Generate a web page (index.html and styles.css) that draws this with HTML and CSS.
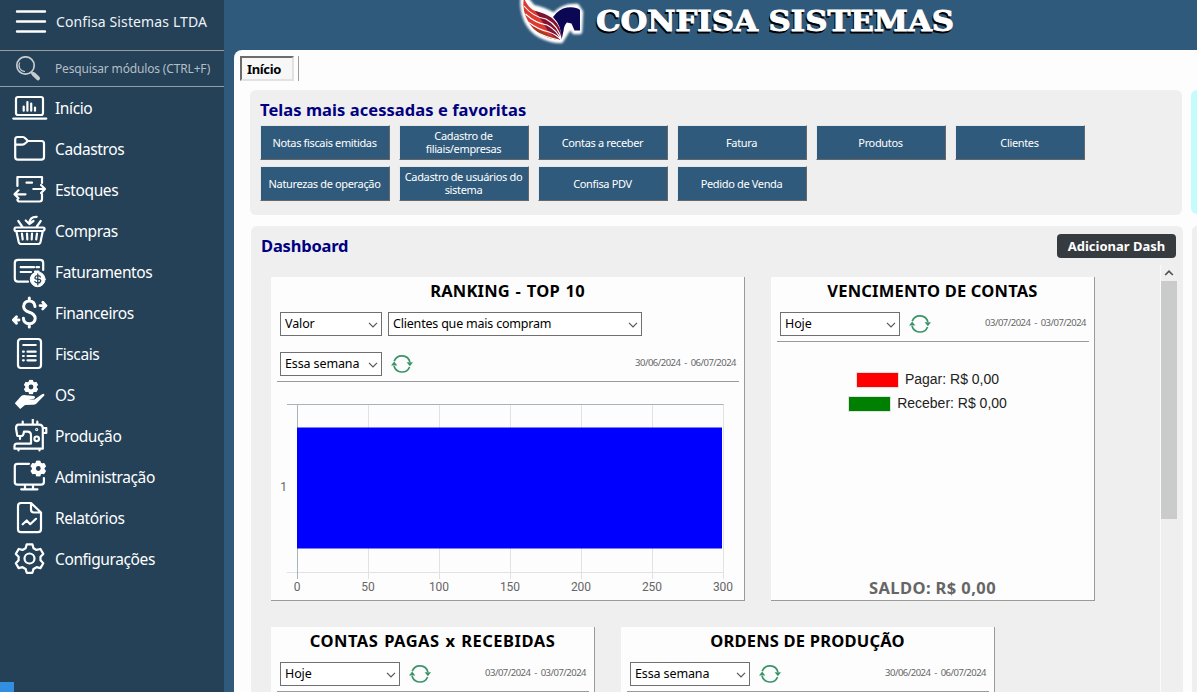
FILE: index.html
```html
<!DOCTYPE html>
<html lang="pt-BR">
<head>
<meta charset="utf-8">
<title>Confisa Sistemas</title>
<link rel="stylesheet" href="styles.css">
</head>
<body>
<svg class="defs" width="0" height="0">
  <symbol id="gear" viewBox="-16 -16 32 32"><path stroke-linejoin="round" d="M-3.9-10.2-2.8-14H2.8L3.9-10.2 6.88-8.48 10.72-9.42 13.52-4.58 10.78-1.72V1.72L13.52 4.58 10.72 9.42 6.88 8.48 3.9 10.2 2.8 14H-2.8L-3.9 10.2-6.88 8.48-10.72 9.42-13.52 4.58-10.78 1.72V-1.72L-13.52-4.58-10.72-9.42-6.88-8.48Z"/></symbol>
  <symbol id="refresh" viewBox="0 0 22 20"><path d="M3.2 7.2A8.3 8.3 0 0 1 18.9 8M18.6 13A8.3 8.3 0 0 1 3 12" fill="none" stroke="#3a9468" stroke-width="1.7"/><path d="M15.6 8.2H22L18.9 12.2ZM0 11.5 3.2 7.6 6.3 11.5Z" fill="#3a9468"/></symbol>
  <symbol id="chev" viewBox="0 0 10 6"><path d="M1 .8 5 4.8 9 .8" fill="none" stroke="#555" stroke-width="1.2"/></symbol>
</svg>
<div class="app">
  <aside class="sidebar">
    <div class="company"><svg class="burger" width="32" height="26" viewBox="0 0 32 26"><path d="M2 2.5H30M2 12.5H30M2 22.5H30" stroke="#fff" stroke-width="2.4" stroke-linecap="round"/></svg><span>Confisa Sistemas LTDA</span></div>
    <div class="search"><svg width="26" height="26" viewBox="0 0 26 26" fill="none" stroke="#c5ccd0"><circle cx="10.5" cy="9.5" r="8.7" stroke-width="1.7"/><path d="M4.8 6.5A6 6 0 0 0 10 15.5" stroke-width="1.1"/><path d="M16 16 18 18" stroke-width="2"/><path d="M18.5 18 23 22.3" stroke-width="4" stroke-linecap="round"/></svg><span>Pesquisar módulos (CTRL+F)</span></div>
    <nav class="nav">
      <a class="item"><svg viewBox="0 0 36 34"><rect x="4" y="6" width="27" height="18" rx="2"/><path d="M1.3 27.6H34.3M11.7 15.5V19.7M15.4 11V19.7M19.2 12.5V19.7M23 16.5V19.7"/></svg><span>Início</span></a>
      <a class="item"><svg viewBox="0 0 36 34"><path d="M3.2 11V7.5Q3.2 5 5.7 5H11Q12.2 5 13.2 6.2L16 9H29.5Q32 9 32 11.5V25Q32 27.7 29.3 27.7H5.8Q3.2 27.7 3.2 25ZM3.2 12.6H10.5Q12 12.6 13 11.5L16 9"/></svg><span>Cadastros</span></a>
      <a class="item"><svg viewBox="0 0 36 34"><path d="M5.4 13V4H30V10M30 21V26Q30 28.5 27.5 28.5H8Q5.4 28.5 5.4 26.5M14.5 9.7H20M21.3 16H32.5M29 12 33 16 29 20M13.5 21.3H3M6.5 17.3 2.5 21.3 6.5 25.3"/></svg><span>Estoques</span></a>
      <a class="item"><svg viewBox="0 0 36 34"><path d="M4 13.5H31Q32.6 13.5 32.6 15T31 17H4Q2.5 17 2.5 15.2T4 13.5M4.3 17 6.7 28Q7.2 30 9.2 30H26Q28 30 28.5 28L30.8 17M6.3 7 10.5 13M28.7 7 24.5 13M9.9 19.5 10.7 25.5M15 19.5 15.3 25.5M20 19.5 19.7 25.5M25 19.5 24.2 25.5M24.7 2.8Q18 2.5 17.3 9M13.7 6.5 17.3 10 21.5 7"/></svg><span>Compras</span></a>
      <a class="item"><svg viewBox="0 0 36 34"><path d="M16 26.7H6Q2.8 26.7 2.8 23.5V8Q2.8 4.9 6 4.9H28Q31.2 4.9 31.2 8V15M8.7 12.2H22M8.7 17H19M24.5 12.2H27M23 16.5H26.5"/><circle cx="25.7" cy="24.3" r="7.4" fill="#fff" stroke-width="1"/><path d="M28.4 22Q28 20.7 25.8 20.7T23 22.4 25.8 24.2 28.6 26.2 25.8 28 22.8 26.5M25.8 19V29.8" stroke="#244158" stroke-width="1.3"/></svg><span>Faturamentos</span></a>
      <a class="item"><svg viewBox="0 0 36 34"><path stroke-width="3" d="M23 10.5Q22.4 5 17.3 5T11.6 10.3Q11.7 14.5 17.3 16.3T23.2 22.3Q23 27.7 17.3 27.7T11.4 22.3M17.3 2V5M17.3 28V31"/><path stroke-width="2.8" d="M28 9.6H33M30.8 6.3 34 9.6 30.8 12.9M7 24H2M4.5 20.7 1.4 24 4.5 27.3"/></svg><span>Financeiros</span></a>
      <a class="item"><svg viewBox="0 0 36 34"><rect x="6" y="2" width="23" height="29" rx="3"/><path d="M11.3 8H23.7M15.5 14.7H23.7M15.5 19H23.7M15.5 23.3H23.7M11 14.7H11.8M11 19H11.8M11 23.3H11.8"/></svg><span>Fiscais</span></a>
      <a class="item"><svg viewBox="0 0 36 34"><g fill="#fff" stroke-width="3"><use href="#gear" x="11.5" y="1.5" width="15" height="15"/></g><circle cx="19" cy="9" r="2.4" fill="#244158" stroke="none"/><path fill="#fff" stroke="none" d="M2.8 25.2 9 18.2Q11 16.5 14 17.2L22 18Q24 19 22 20.8L16.5 21.5H22.5L30 16.2Q33 15 32.3 17.5L24 26Q22.8 27 20.5 26.8L13 27 8.2 31Z"/></svg><span>OS</span></a>
      <a class="item"><svg viewBox="0 0 36 34"><path d="M6.5 5.7H27Q30.8 5.7 30.8 9.5V29.7H2.5V27Q2.5 24.6 5 24.6H19V16.5Q19 12.7 15.5 12.7H12Q11.5 17 9.5 17H6Q5 17 5 15L4 9.5Q4 5.7 6.5 5.7M8 17V20M10.7 2.5V5M20.8 0V5M25.3 2.7V5M31 9H34.3V14H31M6.5 29.7V31.5M27.5 29.7V31.5"/><circle cx="24.7" cy="19.8" r="2.3"/><circle cx="24.7" cy="10.5" r=".5"/></svg><span>Produção</span></a>
      <a class="item"><svg viewBox="0 0 36 34"><path d="M17 3.8H5.5Q2.8 3.8 2.8 6.3V22Q2.8 24.7 5.5 24.7H29Q31.9 24.7 31.9 22V18M13 24.7V29M21 24.7V29M9.2 29.3H25.5"/><g fill="#fff" stroke-width="3"><use href="#gear" x="18" y=".3" width="16.5" height="16.5"/></g><circle cx="26.3" cy="8.5" r="2.4" fill="#244158" stroke="none"/></svg><span>Administração</span></a>
      <a class="item"><svg viewBox="0 0 36 34"><path d="M9 2H19L29 11.5V28Q29 31.2 26 31.2H9Q6 31.2 6 28.2V5Q6 2 9 2ZM19 2V8.5Q19 11.5 22 11.5H29M10.7 23.3 14.7 19.5 18.2 23.2 24 17.8"/></svg><span>Relatórios</span></a>
      <a class="item"><svg viewBox="0 0 36 34"><use href="#gear" x="1.3" y=".3" width="32.5" height="32.5"/><circle cx="17.5" cy="16.5" r="5"/></svg><span>Configurações</span></a>
    </nav>
    <div class="corner"></div>
  </aside>
  <div class="content">
    <header class="top">
      <svg class="brand" width="450" height="50" viewBox="0 0 450 50">
        <defs><filter id="glow" x="-30%" y="-30%" width="160%" height="160%"><feGaussianBlur stdDeviation="1.3"/></filter></defs>
        <path d="M12-4Q10 8 15 20 20 31 30 36 40 41 50 41L55 33 60 26 63 32H69L70 12 66 6Q52 5 43 15Q32 9 22 7L13-4Z" fill="#fff" stroke="#fff" stroke-width="4.5" stroke-linejoin="round" filter="url(#glow)"/>
        <path d="M13-2Q11 8 15 17 20 31 36 37 44 40 50 40 52 30 43 20 34 14 22 10 16 6 13-2Z" fill="#db3a31"/>
        <path d="M24 11Q34 13 41 18 51 27 50.500 40 43 38 37 31 31 20 24 11Z" fill="#821231"/>
        <path d="M20 25Q34 34 50 40 30 39 20 25Z" fill="#a63b22"/>
        <path d="M42 17Q48 8.500 56 7.500 65 6.500 69 10L69 30.500H63.500L60.500 23.500 56 22.500Q53 25 52.500 31L50.500 40Q51 26 42 17Z" fill="#0c0754"/>
        <path d="M13 6Q22 17 35 19 48 26 50.500 40M14.500 14Q24 23 36 25 46 30 50 40M17 22Q28 30 38 32 46 35 50 40M23 31Q34 37 48 40" fill="none" stroke="#fff" stroke-width="1.1"/>
        <text x="84" y="32.500" class="wordmark shade" textLength="358" lengthAdjust="spacingAndGlyphs">CONFISA SISTEMAS</text>
        <text x="85" y="30.500" class="wordmark" textLength="358" lengthAdjust="spacingAndGlyphs" aria-hidden="true">CONFISA SISTEMAS</text>
      </svg>
    </header>
    <main class="main">
      <div class="tabs"><div class="tab">Início</div><div class="tabsep"></div></div>
      <div class="row">
        <section class="card favs">
          <h2>Telas mais acessadas e favoritas</h2>
          <div class="buttons">
            <div class="btn">Notas fiscais emitidas</div><div class="btn">Cadastro de<br>filiais/empresas</div><div class="btn">Contas a receber</div><div class="btn">Fatura</div><div class="btn">Produtos</div><div class="btn">Clientes</div><div class="btn">Naturezas de operação</div><div class="btn">Cadastro de usuários do<br>sistema</div><div class="btn">Confisa PDV</div><div class="btn">Pedido de Venda</div>
          </div>
        </section>
        <div class="side-cyan"></div>
      </div>
      <div class="row lower">
        <section class="card dash">
          <div class="dash-head"><h2 class="dash-title">Dashboard</h2><div class="add">Adicionar Dash</div></div>
          <div class="dash-body">
            <div class="panels">
              <article class="panel wide">
                <h3 class="t-rank">RANKING - TOP 10</h3>
                <div class="controls"><div class="sel w102">Valor<svg><use href="#chev"/></svg></div><div class="sel w254">Clientes que mais compram<svg><use href="#chev"/></svg></div></div>
                <div class="controls second"><div class="sel w102">Essa semana<svg><use href="#chev"/></svg></div><svg class="refresh"><use href="#refresh"/></svg><time>30/06/2024 - 06/07/2024</time></div>
                <hr>
                <svg class="chart" width="473" height="218" viewBox="271 382 473 218">
                  <path d="M368.5 404V579M439.5 404V579M510.5 404V579M581.5 404V579M652.5 404V579M723.5 404V579M287 572.5H723" stroke="#e2e2e4" fill="none"/>
                  <path d="M287 404.5H723.5M297.5 404V579" stroke="#aab3ba" fill="none"/>
                  <rect x="297" y="427.5" width="425" height="121" fill="#00f"/>
                  <g class="axis"><text x="283.5" y="491">1</text><text x="297" y="591">0</text><text x="368" y="591">50</text><text x="439" y="591">100</text><text x="510" y="591">150</text><text x="581" y="591">200</text><text x="652" y="591">250</text><text x="723" y="591">300</text></g>
                </svg>
              </article>
              <article class="panel">
                <h3 class="t-venc">VENCIMENTO DE CONTAS</h3>
                <div class="controls"><div class="sel w120">Hoje<svg><use href="#chev"/></svg></div><svg class="refresh"><use href="#refresh"/></svg><time>03/07/2024 - 03/07/2024</time></div>
                <hr>
                <div class="legend"><div><i class="red"></i>Pagar: R$ 0,00</div><div><i class="green"></i>Receber: R$ 0,00</div></div>
                <div class="saldo">SALDO: R$ 0,00</div>
              </article>
              <article class="panel">
                <h3 class="t-pagas">CONTAS PAGAS x RECEBIDAS</h3>
                <div class="controls"><div class="sel w120">Hoje<svg><use href="#chev"/></svg></div><svg class="refresh"><use href="#refresh"/></svg><time>03/07/2024 - 03/07/2024</time></div>
                <hr>
              </article>
              <article class="panel mid">
                <h3 class="t-ordens">ORDENS DE PRODUÇÃO</h3>
                <div class="controls"><div class="sel w120">Essa semana<svg><use href="#chev"/></svg></div><svg class="refresh"><use href="#refresh"/></svg><time>30/06/2024 - 06/07/2024</time></div>
                <hr>
              </article>
            </div>
            <div class="scroll"><svg width="10" height="6" viewBox="0 0 10 6"><path d="M1.2 5 5 1.2 8.8 5" fill="none" stroke="#505050" stroke-width="1.7"/></svg><div class="thumb"></div></div>
          </div>
        </section>
        <div class="side-gray"></div>
      </div>
    </main>
  </div>
</div>
</body>
</html>
```
FILE: styles.css
```css
* { box-sizing: border-box; }
body { margin: 0; font-family: "Noto Sans", sans-serif; color: #000; }
h2, h3 { margin: 0; }
.defs { display: block; }
.app { display: flex; width: 1197px; height: 692px; overflow: hidden; background: #305a7c; }

.sidebar { width: 224px; background: #244158; display: flex; flex-direction: column; color: #fff; flex: none; }
.company { height: 51px; display: flex; gap: 9px; padding: 8px 0 0 15px; border-bottom: 1px solid #9b9c9e; font-size: 14px; line-height: 27px; color: #f0f3f5; letter-spacing: .12px; }
.search { height: 36px; display: flex; gap: 14px; padding: 5px 0 0 15px; border-bottom: 1px solid #9b9c9e; font-size: 12px; line-height: 25px; color: #b5bec6; letter-spacing: -.16px; }
.company svg, .search svg { flex: none; }
.company svg { margin-top: 1px; }
.nav { display: flex; flex-direction: column; }
.item { display: flex; align-items: center; gap: 7px; height: 41px; padding-left: 12px; font-size: 15.5px; letter-spacing: -.38px; }
.item svg { width: 36px; height: 34px; fill: none; stroke: #fff; stroke-width: 2.2; stroke-linecap: round; stroke-linejoin: round; }
.corner { margin-top: auto; width: 14px; height: 10px; background: #318ee0; }

.content { flex: 1; min-width: 0; display: flex; flex-direction: column; }
.top { height: 50px; padding-left: 287px; flex: none; }
.brand { display: block; overflow: hidden; }
.wordmark { font: bold 27px "DejaVu Serif", serif; fill: #fff; stroke: #fff; stroke-width: .9; }
.wordmark.shade { fill: #000; stroke: #000; }
.main { flex: 1; margin-left: 10px; background: #fdfdfd; border-top-left-radius: 8px; padding: 6px 0 0 6px; overflow: hidden; }

.tabs { display: flex; height: 34px; }
.tab { width: 54px; height: 25px; padding-left: 5px; border: 2px solid #e2e2e2; border-top-color: #6c6c6c; border-left-color: #6c6c6c; background: #f7f7f7; font-weight: bold; font-size: 13px; line-height: 22px; letter-spacing: -.35px; }
.tabsep { width: 1px; height: 25px; margin-left: 4px; background: #9a9a9a; }
.row { display: flex; padding-left: 10px; gap: 9px; }
.card { background: #efefef; border-radius: 6px; width: 932px; flex: none; }
.favs { height: 125px; padding: 10px 0 0 10px; }
h2 { color: #000080; font-size: 16.5px; line-height: 20px; letter-spacing: .06px; }
.buttons { display: grid; grid-template-columns: repeat(6, 130px); grid-auto-rows: 35px; column-gap: 9px; row-gap: 6px; margin-top: 5px; }
.btn { display: flex; align-items: center; justify-content: center; text-align: center; padding: 0 1px 1px 0; background: #305a7c; color: #fff; border: 1px solid #676767; border-top-color: #e6e8ea; border-left-color: #e6e8ea; font-size: 11px; line-height: 13px; letter-spacing: -.35px; }
.side-cyan { width: 16px; height: 124px; background: #c2fcfd; border-radius: 6px 0 0 6px; }
.lower { margin-top: 11px; padding-left: 11px; }
.dash { height: 480px; }
.side-gray { width: 16px; height: 480px; background: #efefef; border-radius: 6px 0 0 0; }
.dash-head { display: flex; justify-content: space-between; height: 39px; padding: 8px 7px 0 10px; }
.dash-title { line-height: 24px; letter-spacing: -.2px; }
.add { width: 119px; height: 24px; background: #363b40; color: #fff; border-radius: 4px; font-size: 13px; font-weight: bold; line-height: 24px; text-align: center; }

.dash-body { display: flex; height: 441px; }
.panels { width: 909px; flex: none; padding: 12px 0 0 20px; display: flex; flex-wrap: wrap; gap: 26px; align-content: flex-start; }
.panel { width: 324px; height: 324px; background: #fdfdfd; border-right: 1px solid #9a9a9a; border-bottom: 1px solid #9a9a9a; display: flex; flex-direction: column; }
.panel.wide { width: 474px; }
.panel.mid { width: 374px; }
h3 { font-size: 16.5px; line-height: 28px; height: 35px; text-align: center; }
.t-rank { letter-spacing: .2px; word-spacing: 1.2px; }
.t-venc { letter-spacing: .2px; }
.t-pagas { letter-spacing: .5px; word-spacing: 1px; }
.t-ordens { letter-spacing: .2px; }
.controls { display: flex; gap: 6px; height: 24px; padding: 0 8px 0 9px; flex: none; }
.controls.second { margin-top: 16px; }
.sel { display: flex; justify-content: space-between; align-items: center; height: 24px; padding: 0 3px 0 4px; background: #fff; border: 1px solid #707070; font-size: 12.5px; line-height: 20px; white-space: nowrap; letter-spacing: -.12px; }
.sel svg { width: 10px; height: 6px; flex: none; margin-top: 2px; }
.w102 { width: 102px; } .w254 { width: 254px; letter-spacing: -.2px; } .w120 { width: 120px; }
.refresh { width: 22px; height: 20px; margin: 2px 0 0 3px; }
time { margin-left: auto; font-size: 9.5px; line-height: 21px; color: #666; letter-spacing: -.52px; word-spacing: 1.9px; }
hr { width: calc(100% - 11px); height: 1px; margin: 5px 0 0 6px; border: 0; background: #9a9a9a; flex: none; }
.chart { display: block; }
.axis { font: 12px Roboto, sans-serif; fill: #666; text-anchor: middle; }
.legend { display: flex; flex-direction: column; align-items: center; padding: 25px 10px 0 0; font: 14px/24px "Liberation Sans", sans-serif; color: #222; }
.legend div { display: flex; align-items: center; gap: 6px; }
.legend i { width: 43px; height: 16px; border: 1px solid #e2e2e2; margin-top: 2px; }
.red { background: #f00; } .green { background: #008000; }
.saldo { margin-top: auto; color: #666; font-weight: bold; font-size: 16.5px; line-height: 24px; text-align: center; letter-spacing: .4px; }
.scroll { width: 17px; border-left: 1px solid #fafafa; display: flex; flex-direction: column; align-items: center; padding-top: 5px; }
.thumb { width: 16px; height: 238px; margin-top: 5px; background: #cacbcb; }
```
